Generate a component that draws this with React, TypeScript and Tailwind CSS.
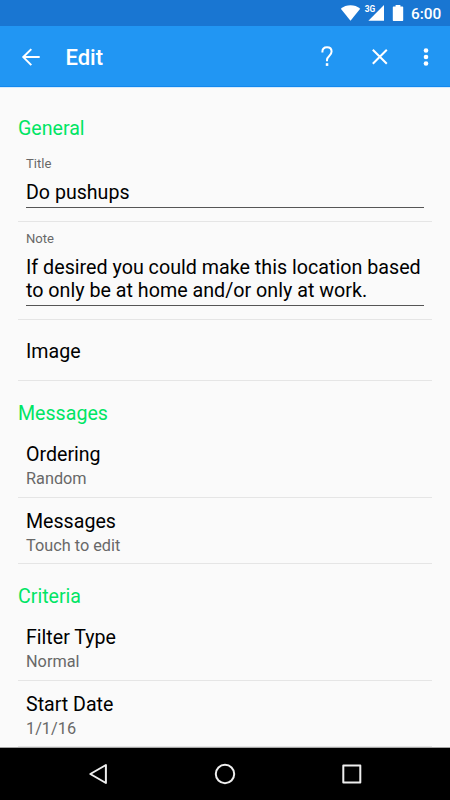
import React from 'react';

function Section({ children, className }: { children: string; className: string }) {
  return <h2 className={`h-6 text-[19.6px] leading-[26px] text-[#00e564] ${className}`}>{children}</h2>;
}

function Preference({ title, value, className }: { title: string; value: string; className: string }) {
  return (
    <div className={`border-b border-[#e5e5e5] pl-2 ${className}`}>
      <div className="h-6 text-[19.6px] leading-[26px] text-black">{title}</div>
      <div className="mt-[3px] h-5 text-[16.3px] leading-5 text-[#686868]">{value}</div>
    </div>
  );
}

function StatusBar() {
  return (
    <div className="flex h-[26px] shrink-0 items-center bg-[#1976d2] text-white">
      <svg className="ml-[340px] h-[26px] w-[68px] shrink-0" viewBox="340 0 68 26" fill="currentColor">
        <path d="M350.5 20.8 340.8 8.7C346.3 4.1 354.7 4.1 360.2 8.7Z" />
        <path d="M384 5.1V20.8H368.4Z" />
        <path d="M368 1H375.6V13H364V1Z" className="fill-[#1976d2]" />
        <path d="M395.6 5h4.8v1.6h2.1q.7 0 .7.7v13q0 .7-.7.7h-9q-.7 0-.7-.7v-13q0-.7.7-.7h2.1Z" />
        <text x="364.7" y="12.3" fontSize="9.4" fontWeight="700" textLength="10.5" lengthAdjust="spacingAndGlyphs">3G</text>
      </svg>
      <span className="ml-[3px] pt-[2px] text-[15.4px] leading-5 font-medium">6:00</span>
    </div>
  );
}

function Toolbar() {
  return (
    <header className="flex h-[61px] shrink-0 items-center border-b border-[#1388ee] bg-[#2196f3] text-white">
      <svg className="mt-px ml-[21px] h-5 w-5" viewBox="0 0 20 20" fill="none" stroke="currentColor" strokeWidth="2">
        <path d="M18.7 10.1H2.5M10.3 2.1l-8 8 8 8" />
      </svg>
      <h1 className="ml-[24.5px] w-[240px] pt-[4px] text-[22px] leading-7 font-medium">Edit</h1>
      <svg className="mt-[2px] ml-[12px] h-6 w-[120px]" viewBox="318 45 120 24" fill="none" stroke="currentColor" strokeWidth="2">
        <path d="M322.4 52.5v-.8c0-3 1.8-4.5 4.6-4.5s4.6 1.6 4.6 4.4c0 4.4-4.6 4.3-4.6 8.4v1.3" />
        <path d="M325.8 63.2h2.5v2.7h-2.5Z" fill="currentColor" stroke="none" />
        <path d="m372.8 49.7 14 14m0-14-14 14" />
        <g fill="currentColor" stroke="none">
          <circle cx="426" cy="50.5" r="2.3" />
          <circle cx="426" cy="57" r="2.3" />
          <circle cx="426" cy="63.5" r="2.3" />
        </g>
      </svg>
    </header>
  );
}

function NavigationBar() {
  return (
    <nav className="flex h-[53px] shrink-0 items-center justify-between border-t border-[#a4a4a4] bg-black px-[87px] text-[#eee]">
      <svg className="h-[22px] w-[22px]" viewBox="0 0 22 22" fill="none" stroke="currentColor" strokeWidth="2" strokeLinejoin="round">
        <path d="M18.9 2v18L3.3 11Z" />
      </svg>
      <svg className="h-[22px] w-[22px]" viewBox="0 0 22 22" fill="none" stroke="currentColor" strokeWidth="2">
        <circle cx="11" cy="11" r="9.2" />
      </svg>
      <svg className="h-[22px] w-[22px]" viewBox="0 0 22 22" fill="none" stroke="currentColor" strokeWidth="2" strokeLinejoin="round">
        <path d="M2.3 2.5h17v17h-17Z" />
      </svg>
    </nav>
  );
}

export default function App() {
  return (
    <div className="flex h-[800px] w-[450px] flex-col overflow-hidden bg-[#fafafa] font-[Roboto,sans-serif]">
      <StatusBar />
      <Toolbar />
      <main className="h-[660px] shrink-0 overflow-hidden border-t border-[#d5eafb] px-[18px]">
        <Section className="mt-[28px]">General</Section>
        <div className="mt-4 h-[66px] border-b border-[#e5e5e5] px-2">
          <div className="h-4 text-[13.1px] leading-4 text-[#686868]">Title</div>
          <div className="mt-2 h-7 border-b border-[#555] text-[19.6px] leading-[26px] text-black">Do pushups</div>
        </div>
        <div className="h-[98px] border-b border-[#e5e5e5] px-2 pt-[9px]">
          <div className="h-4 text-[13.1px] leading-4 text-[#686868]">Note</div>
          <div className="mt-[9px] h-[50px] border-b border-[#555] text-[19.7px] leading-[23px] whitespace-nowrap text-black">
            If desired you could make this location based
            <br />
            to only be at home and/or only at work.
          </div>
        </div>
        <div className="h-[61px] border-b border-[#e5e5e5] pt-[19px] pl-2 text-[19.6px] leading-[26px] text-black">Image</div>
        <Section className="mt-5">Messages</Section>
        <Preference className="mt-[17px] h-[56px]" title="Ordering" value="Random" />
        <Preference className="h-[66px] pt-[11px]" title="Messages" value="Touch to edit" />
        <Section className="mt-5">Criteria</Section>
        <Preference className="mt-[17px] h-[56px]" title="Filter Type" value="Normal" />
        <Preference className="h-[66px] pt-[11px]" title="Start Date" value="1/1/16" />
      </main>
      <NavigationBar />
    </div>
  );
}
